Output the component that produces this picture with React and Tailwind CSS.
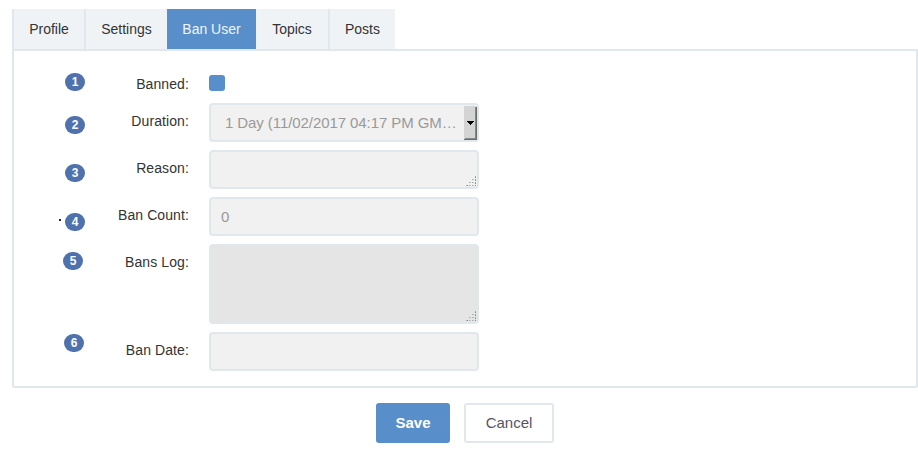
const FONT = "font-['Liberation_Sans',Arial,sans-serif]";

const TABS = [
  { name: 'Profile', style: 'w-[72px] border-l-2 border-[#e1e8ed] bg-[#f0f3f6] text-[#333]' },
  { name: 'Settings', style: 'w-[83px] border-l-2 border-[#e1e8ed] bg-[#f0f3f6] text-[#333]' },
  { name: 'Ban User', style: 'w-[89px] bg-[#588ec9] text-[#f0f5fb]' },
  { name: 'Topics', style: 'w-[72px] bg-[#f0f3f6] text-[#333]' },
  { name: 'Posts', style: 'w-[67px] border-l-2 border-[#e1e8ed] bg-[#f0f3f6] text-[#333]' },
];

const FIELD = 'w-[270px] rounded-[4px] border-2 border-[#e1e8ed] text-[15px] text-[#999]';

function Row({ number, badge, label = 'pt-2', children }) {
  return (
    <div className="flex items-start">
      <div className="w-[81px] shrink-0">
        <div className={`flex h-[18px] w-5 items-center justify-center rounded-[9px] bg-[#4f72ae] text-[12px] font-bold leading-none text-white ${badge}`}>
          {number}
        </div>
      </div>
      <div className={`w-[94px] shrink-0 whitespace-nowrap text-right text-[14px] leading-5 tracking-[0.1px] text-[#333] ${label}`}>{children[0]}</div>
      <div className="ml-5">{children[1]}</div>
    </div>
  );
}

function Grip() {
  return (
    <svg className="mb-[1px] mr-[1px] block" width="10" height="10" shapeRendering="crispEdges" fill="#aaa">
      <path d="M9 0h1v1h-1zM6 3h1v1h-1zM9 3h1v1h-1zM3 6h1v1h-1zM6 6h1v1h-1zM9 6h1v1h-1zM0 9h1v1h-1zM3 9h1v1h-1zM6 9h1v1h-1z" />
      <path fill="#888" d="M9 1h1v1h-1zM9 4h1v1h-1zM9 7h1v1h-1zM9 9h1v1h-1zM1 9h1v1h-1z" />
      <path fill="#c4c4c4" d="M7 3h1v1h-1zM4 6h1v1h-1zM7 6h1v1h-1zM4 9h1v1h-1zM7 9h1v1h-1z" />
    </svg>
  );
}

export default function App() {
  return (
    <div className={`h-[453px] w-[918px] overflow-hidden bg-white pl-3 pt-[9px] ${FONT}`}>
      <div className="flex h-10">
        {TABS.map((t) => (
          <div key={t.name} className={`flex items-center justify-center text-[14px] ${t.style}`}>{t.name}</div>
        ))}
      </div>

      <div className="h-[339px] rounded-b-[2px] border-2 border-[#e1e8ed] pt-[23px]">
        <div className="flex flex-col">
          <div className="h-[29px]">
            <Row number="1" badge="ml-[51px] -mt-px" label="">
              <span>Banned:</span>
              <div className="mt-px size-4 rounded-[3px] bg-[#588ec9]" />
            </Row>
          </div>
          <div className="h-[47px]">
            <Row number="2" badge="ml-[51px] mt-[13px]">
              <span>Duration:</span>
              <div className={`flex h-[39px] justify-between bg-[#f1f1f1] pl-[14px] ${FIELD}`}>
                <span className="whitespace-nowrap leading-[36px] tracking-[-0.08px]">1 Day (11/02/2017 04:17 PM GM…</span>
                <svg className="mt-px shrink-0" width="14" height="34" shapeRendering="crispEdges">
                  <path fill="#d4d4d4" d="M1 0h12v33H1z" />
                  <path fill="#6b6b6b" d="M14 0v34H0l2-2h10V2z" />
                  <path fill="#888" d="M12 1h1v31h-1zM2 32h11v1H2z" />
                  <path fill="#000" d="M4 15h7v1h-1v1H9v1H8v1H7v-1H6v-1H5v-1H4z" />
                </svg>
              </div>
            </Row>
          </div>
          <div className="h-[47px]">
            <Row number="3" badge="ml-[51px] mt-[14px]">
              <span>Reason:</span>
              <div className={`flex h-[39px] items-end justify-end bg-[#f1f1f1] ${FIELD}`}><Grip /></div>
            </Row>
          </div>
          <div className="relative h-[47px]">
            <span className="absolute left-[45px] top-[22px] size-[2px] bg-[#222]" />
            <Row number="4" badge="ml-[51px] mt-4">
              <span>Ban Count:</span>
              <div className={`h-[39px] bg-[#f1f1f1] pl-[10px] leading-[36px] ${FIELD}`}>0</div>
            </Row>
          </div>
          <div className="h-[88px]">
            <Row number="5" badge="ml-[49px] mt-2">
              <span>Bans Log:</span>
              <div className={`flex h-20 items-end justify-end bg-[#e5e5e5] ${FIELD}`}><Grip /></div>
            </Row>
          </div>
          <Row number="6" badge="ml-[50px] mt-[2px]">
            <span>Ban Date:</span>
            <div className={`h-[39px] bg-[#f1f1f1] ${FIELD}`} />
          </Row>
        </div>
      </div>

      <div className="mt-[15px] flex gap-[14px] pl-[364px] text-[15px]">
        <button className="h-10 w-[74px] rounded-[3px] bg-[#588ec9] font-bold text-white">Save</button>
        <button className="h-10 w-[90px] rounded-[3px] border-2 border-[#e1e8ed] bg-white text-[#556]">Cancel</button>
      </div>
    </div>
  );
}
